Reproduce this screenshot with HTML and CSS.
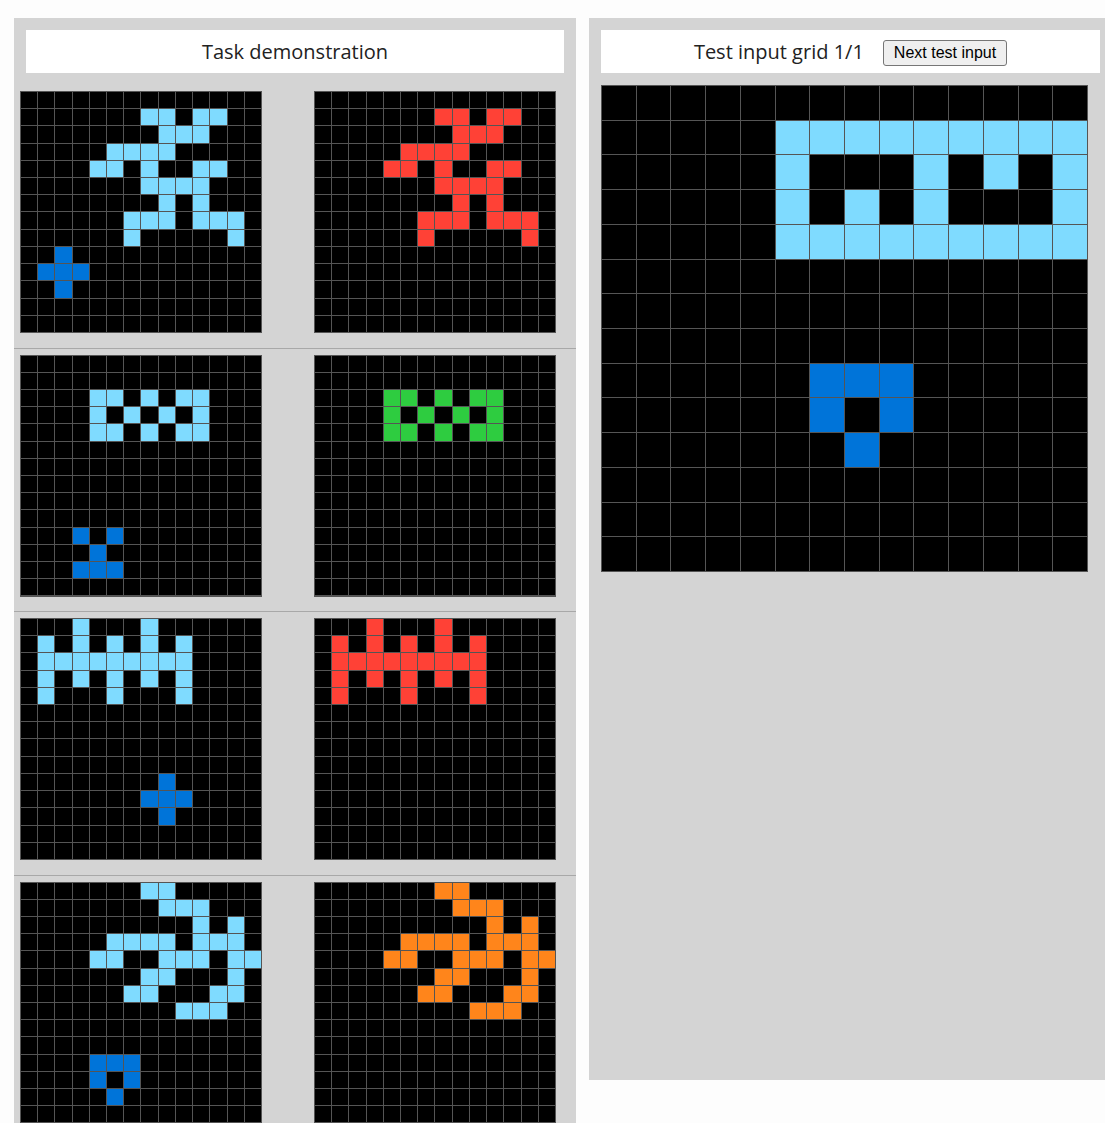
FILE: index.html
```html
<!DOCTYPE html>
<html>
<head>
<meta charset="utf-8">
<title>ARC task</title>
<link rel="stylesheet" href="styles.css">
</head>
<body>
<div class="page">
  <section class="panel demo-panel">
    <div class="title-box">Task demonstration</div>

    <div class="pair">
      <div class="grid small" data-rows="00000000000000,00000008808800,00000000888000,00000888800000,00008808008800,00000008888000,00000000808000,00000088808880,00000080000080,00100000000000,01110000000000,00100000000000,00000000000000,00000000000000"></div>
      <div class="grid small" data-rows="00000000000000,00000002202200,00000000222000,00000222200000,00002202002200,00000002222000,00000000202000,00000022202220,00000020000020,00000000000000,00000000000000,00000000000000,00000000000000,00000000000000"></div>
    </div>

    <div class="pair">
      <div class="grid small" data-rows="00000000000000,00000000000000,00008808088000,00008080808000,00008808088000,00000000000000,00000000000000,00000000000000,00000000000000,00000000000000,00010100000000,00001000000000,00011100000000,00000000000000"></div>
      <div class="grid small" data-rows="00000000000000,00000000000000,00003303033000,00003030303000,00003303033000,00000000000000,00000000000000,00000000000000,00000000000000,00000000000000,00000000000000,00000000000000,00000000000000,00000000000000"></div>
    </div>

    <div class="pair">
      <div class="grid small" data-rows="00080008000000,08080808080000,08888888880000,08080808080000,08000800080000,00000000000000,00000000000000,00000000000000,00000000000000,00000000100000,00000001110000,00000000100000,00000000000000,00000000000000"></div>
      <div class="grid small" data-rows="00020002000000,02020202020000,02222222220000,02020202020000,02000200020000,00000000000000,00000000000000,00000000000000,00000000000000,00000000000000,00000000000000,00000000000000,00000000000000,00000000000000"></div>
    </div>

    <div class="pair">
      <div class="grid small" data-rows="00000008800000,00000000888000,00000000008080,00000888808880,00008800888088,00000008800080,00000088000880,00000000088800,00000000000000,00000000000000,00001110000000,00001010000000,00000100000000,00000000000000"></div>
      <div class="grid small" data-rows="00000007700000,00000000777000,00000000007070,00000777707770,00007700777077,00000007700070,00000077000770,00000000077700,00000000000000,00000000000000,00000000000000,00000000000000,00000000000000,00000000000000"></div>
    </div>
  </section>

  <section class="panel test-panel">
    <div class="title-box">
      <span class="test-label">Test input grid 1/1</span>
      <button class="next-btn" type="button">Next test input</button>
    </div>
    <div class="grid large" data-rows="00000000000000,00000888888888,00000800080808,00000808080008,00000888888888,00000000000000,00000000000000,00000000000000,00000011100000,00000010100000,00000001000000,00000000000000,00000000000000,00000000000000"></div>
  </section>
</div>
<script src="script.js"></script>
</body>
</html>
```

FILE: styles.css
```css
html {
  overflow: hidden;
}

body {
  margin: 0;
  background: #fdfdfd;
  font-family: "Open Sans", "Liberation Sans", sans-serif;
  color: #222;
}

.page {
  display: flex;
  align-items: flex-start;
  gap: 13px;
  padding: 18px 0 0 14px;
  width: 1200px;
}

.panel {
  background: #d4d4d4;
  padding-top: 12px;
  box-sizing: border-box;
}

.demo-panel {
  width: 562px;
  flex: none;
}

.test-panel {
  width: 523px;
  height: 1062px;
  flex: none;
  padding-left: 12px;
  padding-right: 12px;
}

.title-box {
  background: #fff;
  height: 43px;
  display: flex;
  align-items: center;
  justify-content: center;
  gap: 19px;
  font-size: 20px;
  line-height: 1;
}

.demo-panel .title-box {
  margin: 0 12px 12px;
}

.test-panel .title-box {
  margin-bottom: 12px;
}

.next-btn {
  font-family: "Liberation Sans", Arial, sans-serif;
  font-size: 16px;
  color: #000;
  background: #efefef;
  border: 1px solid #767676;
  border-radius: 3px;
  height: 26px;
  padding: 0 10px;
  margin-top: 2px;
}

.pair {
  display: flex;
  gap: 52px;
  padding: 6px 0 14.5px 6px;
  border-bottom: 1px solid #a8a8a8;
}

.grid {
  display: grid;
  grid-template-columns: repeat(14, 1fr);
  grid-template-rows: repeat(14, 1fr);
  gap: 1px;
  padding: 1px;
  background: #555;
  box-sizing: border-box;
}

.grid.small {
  width: 242px;
  height: 242px;
}

.grid.large {
  width: 487px;
  height: 487px;
}

.cell {
  background: #000;
}

.sym1 { background: #0074d9; }
.sym2 { background: #ff4136; }
.sym3 { background: #2ecc40; }
.sym7 { background: #ff851b; }
.sym8 { background: #7fdbff; }
```

FILE: script.js
```js
document.querySelectorAll('.grid').forEach(function (grid) {
  var rows = grid.getAttribute('data-rows').split(',');
  rows.forEach(function (row) {
    for (var i = 0; i < row.length; i++) {
      var cell = document.createElement('div');
      cell.className = 'cell sym' + row[i];
      grid.appendChild(cell);
    }
  });
});
```
